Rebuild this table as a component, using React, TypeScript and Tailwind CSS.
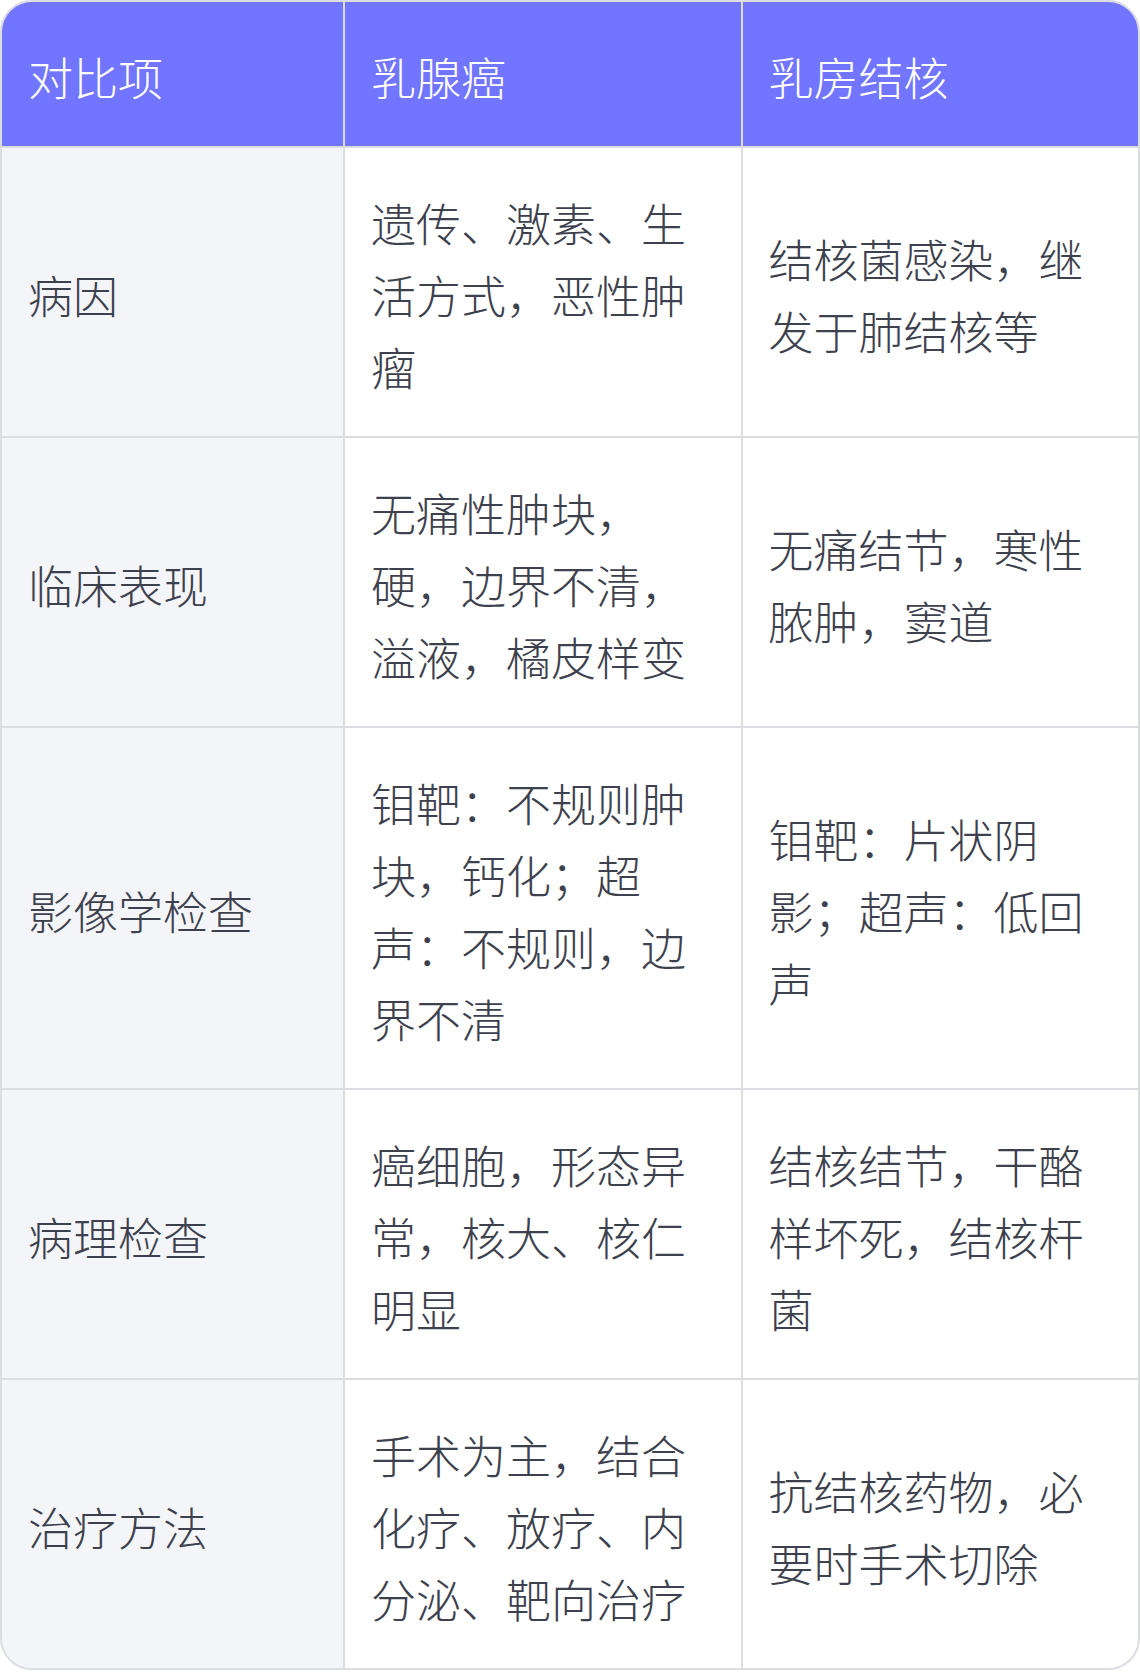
const rows = [
  {
    item: "病因",
    cancer: "遗传、激素、生活方式，恶性肿瘤",
    tb: "结核菌感染，继发于肺结核等",
  },
  {
    item: "临床表现",
    cancer: "无痛性肿块，硬，边界不清，溢液，橘皮样变",
    tb: "无痛结节，寒性脓肿，窦道",
  },
  {
    item: "影像学检查",
    cancer: "钼靶：不规则肿块，钙化；超声：不规则，边界不清",
    tb: "钼靶：片状阴影；超声：低回声",
  },
  {
    item: "病理检查",
    cancer: "癌细胞，形态异常，核大、核仁明显",
    tb: "结核结节，干酪样坏死，结核杆菌",
  },
  {
    item: "治疗方法",
    cancer: "手术为主，结合化疗、放疗、内分泌、靶向治疗",
    tb: "抗结核药物，必要时手术切除",
  },
];

const cell = "flex items-center pl-[26px] pr-7 pt-[39px] pb-[33px] leading-[72px]";

export default function App() {
  return (
    <div
      className="w-[1140px] bg-white"
      style={{ fontFamily: '"Noto Sans CJK SC", "Noto Sans", sans-serif' }}
    >
      <div className="overflow-hidden rounded-[32px] border-2 border-[#dcdde3]">
        <div className="grid grid-cols-[341px_1fr_1fr] gap-[2px] bg-[#dcdde3] text-[45px] font-light text-[#3d404d]">
          <div className={`${cell} bg-[#7175ff] text-white`}>对比项</div>
          <div className={`${cell} bg-[#7175ff] text-white`}>乳腺癌</div>
          <div className={`${cell} bg-[#7175ff] text-white`}>乳房结核</div>
          {rows.map((r) => (
            <>
              <div key={r.item + "a"} className={`${cell} bg-[#f4f5f9]`}>
                {r.item}
              </div>
              <div key={r.item + "b"} className={`${cell} bg-white`}>
                <span>{r.cancer}</span>
              </div>
              <div key={r.item + "c"} className={`${cell} bg-white`}>
                <span>{r.tb}</span>
              </div>
            </>
          ))}
        </div>
      </div>
    </div>
  );
}
